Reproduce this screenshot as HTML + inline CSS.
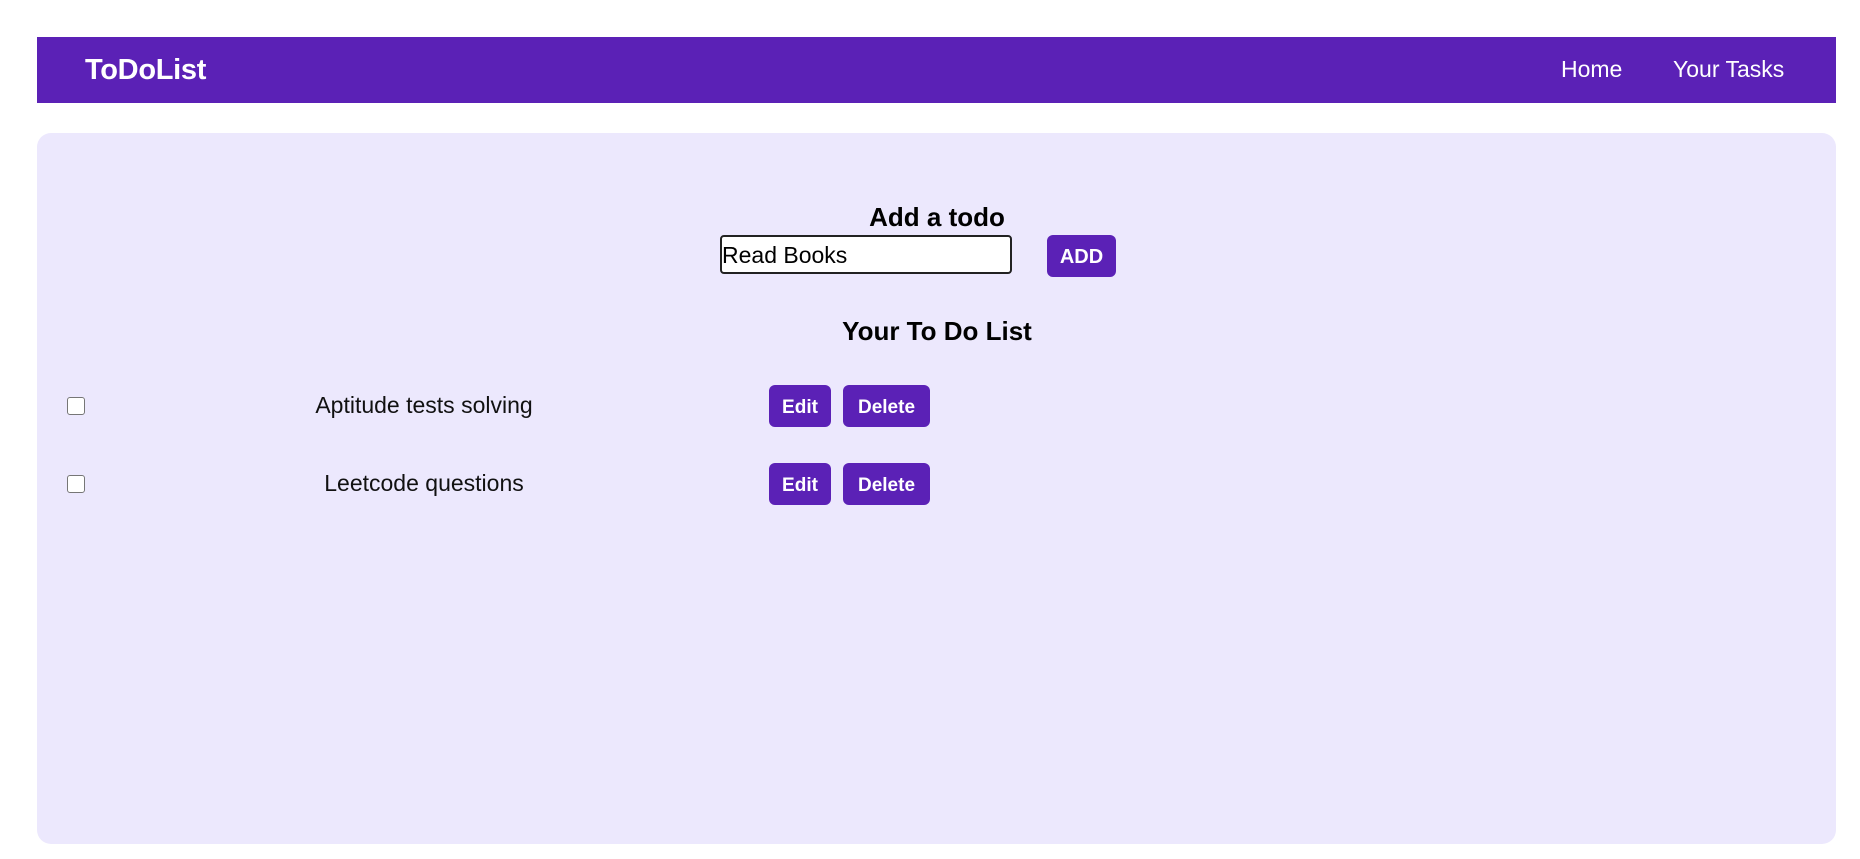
<!DOCTYPE html>
<html><head><style>
*{box-sizing:border-box;margin:0;padding:0}
body{width:1860px;height:859px;background:#fff;font-family:"Liberation Sans",sans-serif;position:relative;overflow:hidden}
.nav{position:absolute;left:37px;top:37px;width:1799px;height:66px;background:#5b21b6;color:#fff}
.logo{position:absolute;left:48px;top:17px;font-size:29px;font-weight:bold;letter-spacing:-0.3px}
.nav a{position:absolute;top:19px;font-size:23px;color:#fff;text-decoration:none}
.card{position:absolute;left:37px;top:133px;width:1799px;height:711px;background:#ece8fd;border-radius:14px}
.ab{position:absolute;white-space:nowrap}
.h{font-weight:bold;font-size:26px;color:#000;transform:translateX(-50%)}
.inp{position:absolute;left:720px;top:235px;width:292px;height:39px;background:#fff;border:2.5px solid #222;border-radius:4px;font-size:23px;line-height:36px;padding-left:0}
.btn{position:absolute;background:#5b21b6;color:#fff;font-weight:bold;border-radius:6px;text-align:center;font-size:19px}
.cb{position:absolute;left:67px;width:18px;height:18px;border:1.5px solid #767676;border-radius:3px;background:#fff}
.t{font-size:23px;color:#111;transform:translateX(-50%)}
</style></head><body>
<div class="nav"><div class="logo">ToDoList</div><a style="left:1524px">Home</a><a style="left:1636px">Your Tasks</a></div>
<div class="card"></div>
<div class="ab h" style="left:937px;top:202px">Add a todo</div>
<div class="inp">Read Books</div>
<div class="btn" style="left:1047px;top:235px;width:69px;height:42px;line-height:45px;font-size:20px">ADD</div>
<div class="ab h" style="left:937px;top:316px">Your To Do List</div>
<div class="cb" style="top:397px"></div>
<div class="ab t" style="left:424px;top:392px">Aptitude tests solving</div>
<div class="btn" style="left:769px;top:385px;width:62px;height:42px;line-height:45px">Edit</div>
<div class="btn" style="left:843px;top:385px;width:87px;height:42px;line-height:45px">Delete</div>
<div class="cb" style="top:475px"></div>
<div class="ab t" style="left:424px;top:470px">Leetcode questions</div>
<div class="btn" style="left:769px;top:463px;width:62px;height:42px;line-height:45px">Edit</div>
<div class="btn" style="left:843px;top:463px;width:87px;height:42px;line-height:45px">Delete</div>
</body></html>
